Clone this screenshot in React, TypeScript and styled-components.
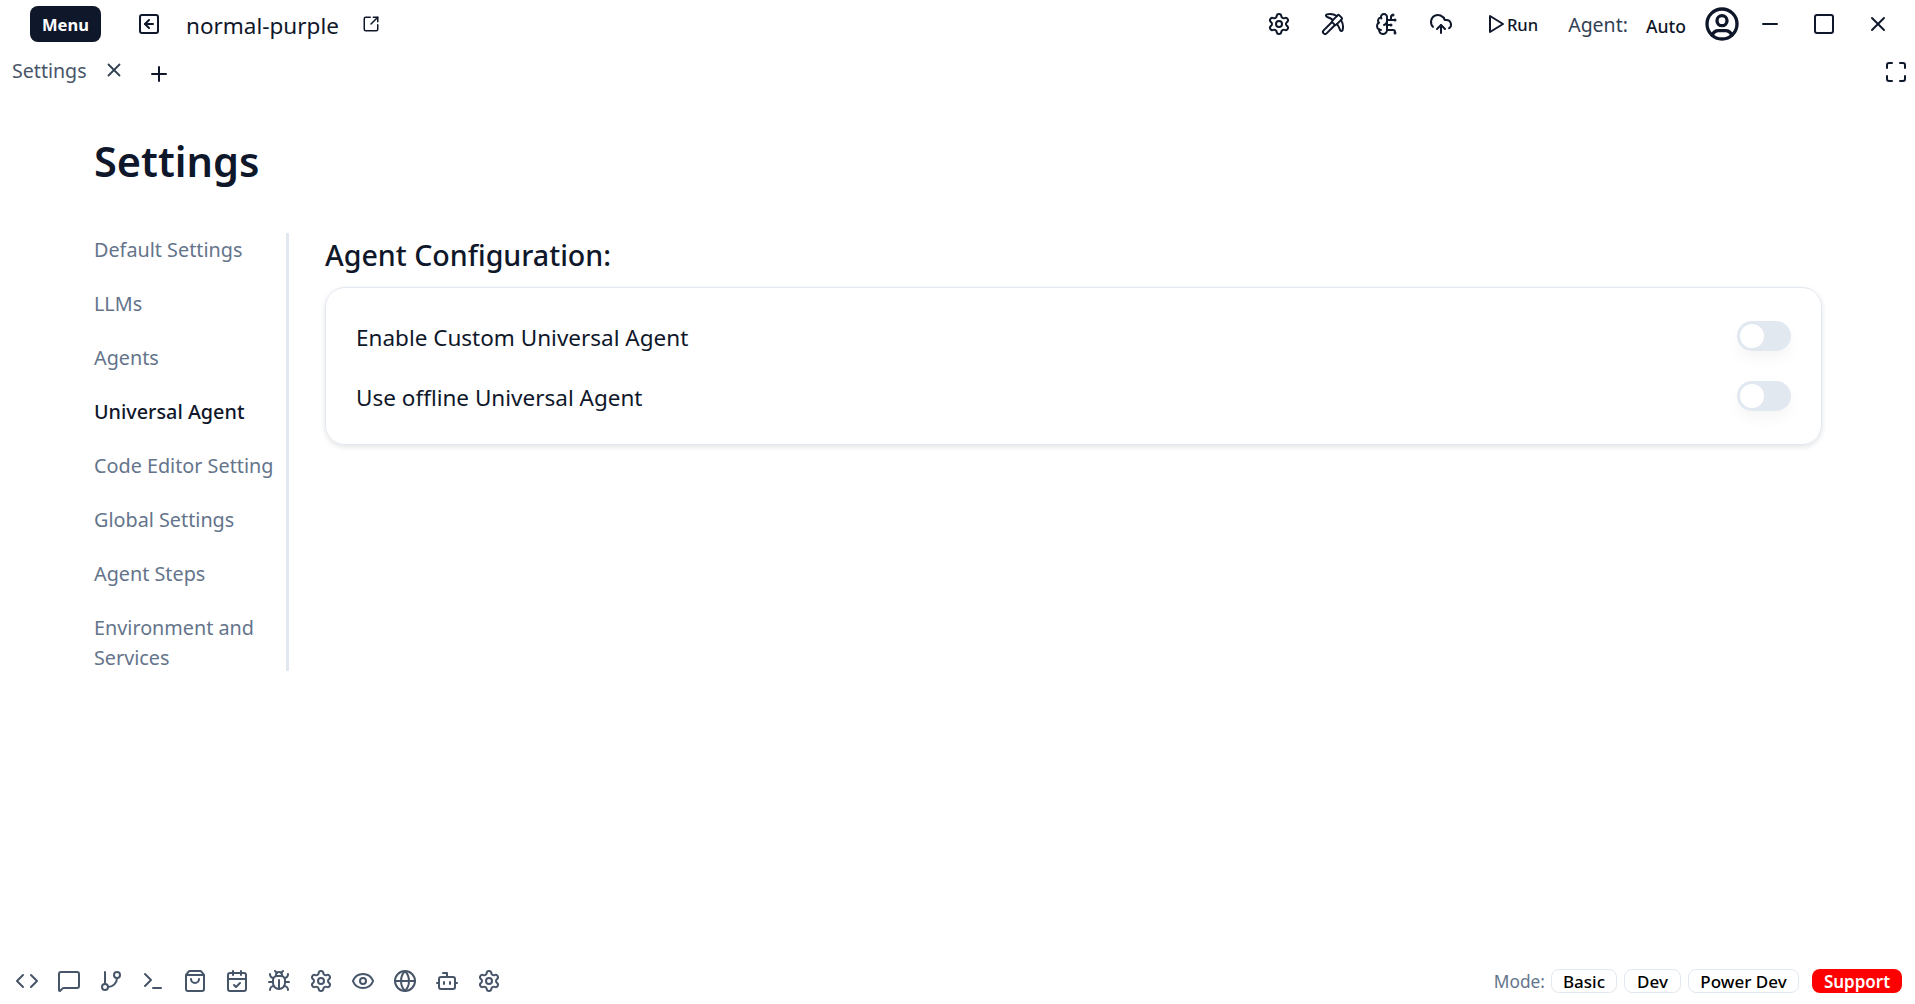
import React, { useState } from 'react'
import styled, { createGlobalStyle } from 'styled-components'
import {
  Settings as SettingsIcon,
  Pickaxe,
  BrainCircuit,
  CloudUpload,
  Minus,
  Square,
  X,
  Plus,
  Maximize,
  SquareArrowLeft,
  SquareArrowOutUpRight,
  Code,
  MessageSquare,
  GitBranch,
  Terminal,
  ShoppingBag,
  CalendarCheck,
  Bug,
  Eye,
  Globe,
  Bot,
} from 'lucide-react'
import { TbPlayerPlay, TbUserCircle } from 'react-icons/tb'

const GlobalStyle = createGlobalStyle`
  html, body {
    margin: 0;
    height: 100%;
    background: #fff;
    font-family: "Noto Sans", "Open Sans", sans-serif;
    color: #0f172a;
  }
  #root {
    height: 100%;
  }
`

const Page = styled.div`
  height: 100vh;
  display: flex;
  flex-direction: column;
  overflow: hidden;
`

const TopBar = styled.div`
  height: 48px;
  display: flex;
  align-items: center;
  padding: 0 25px 0 30px;
  flex-shrink: 0;
`

const MenuButton = styled.button`
  width: 71px;
  height: 36px;
  border: none;
  border-radius: 8px;
  background: #0f172a;
  color: #fff;
  font: 700 16.5px "Noto Sans", sans-serif;
  margin-right: 36px;
`

const ProjectName = styled.span`
  font-size: 22.5px;
  margin: 2px 23px 0 25px;
`

const TopActions = styled.div`
  margin-left: auto;
  display: flex;
  align-items: center;
`

const TopIcon = styled.span<{ $gap?: number }>`
  display: flex;
  margin-left: ${({ $gap }) => $gap ?? 30}px;
`

const RunLabel = styled.span`
  font-size: 16.6px;
  font-weight: 500;
`

const AgentLabel = styled.span`
  font-size: 19.5px;
  color: #334155;
  margin-left: 30px;
`

const AgentValue = styled.span`
  font-size: 17.6px;
  font-weight: 500;
  margin: 3px 0 0 18px;
`

const TabRow = styled.div`
  height: 48px;
  display: flex;
  align-items: center;
  padding: 0 7px 0 12px;
  flex-shrink: 0;
`

const TabLabel = styled.span`
  font-size: 19.6px;
  color: #475569;
  margin-top: -3px;
`

const TabClose = styled.span`
  display: flex;
  margin: -4px 0 0 16px;
  color: #334155;
`

const TabAdd = styled.span`
  display: flex;
  margin: 3px 0 0 22px;
`

const ExpandIcon = styled.span`
  display: flex;
  margin-left: auto;
`

const Main = styled.div`
  flex: 1;
  padding: 38px 93px 0 94px;
`

const PageTitle = styled.h1`
  margin: 0 0 45px;
  font-size: 41.5px;
  line-height: 54px;
  font-weight: 600;
`

const Columns = styled.div`
  display: flex;
`

const SideNav = styled.nav`
  width: 192px;
  height: 436px;
  padding-top: 2px;
  box-sizing: content-box;
  border-right: 3px solid #e2e8f0;
  display: flex;
  flex-direction: column;
  gap: 24px;
`

const NavItem = styled.a<{ $active?: boolean }>`
  font-size: 19.8px;
  line-height: 30px;
  width: 182px;
  color: ${({ $active }) => ($active ? '#0f172a' : '#64748b')};
  font-weight: ${({ $active }) => ($active ? 500 : 400)};
`

const Content = styled.div`
  flex: 1;
  padding: 1px 0 0 36px;
`

const SectionTitle = styled.h2`
  margin: 0 0 11px;
  font-size: 28.6px;
  line-height: 42px;
  font-weight: 500;
`

const Card = styled.div`
  border: 1px solid #e2e8f0;
  border-radius: 20px;
  box-shadow: 0 2px 5px rgba(15, 23, 42, 0.12);
  padding: 33px 30px;
  display: flex;
  flex-direction: column;
  gap: 30px;
`

const OptionRow = styled.div`
  display: flex;
  align-items: center;
  justify-content: space-between;
  height: 30px;
`

const OptionLabel = styled.span`
  font-size: 22.5px;
  margin-top: 2px;
`

const Toggle = styled.button<{ $on: boolean }>`
  position: relative;
  width: 54px;
  height: 30px;
  border: none;
  border-radius: 15px;
  padding: 0;
  background: ${({ $on }) => ($on ? '#0f172a' : '#e2e8f0')};
  box-shadow: 0 8px 14px rgba(15, 23, 42, 0.04);
  cursor: pointer;
`

const Thumb = styled.span<{ $on: boolean }>`
  position: absolute;
  top: 3px;
  left: ${({ $on }) => ($on ? 27 : 3)}px;
  width: 24px;
  height: 24px;
  border-radius: 50%;
  background: #fff;
`

const BottomBar = styled.div`
  height: 35px;
  display: flex;
  align-items: flex-start;
  padding: 0 13px 0 15px;
  flex-shrink: 0;
`

const ToolIcons = styled.div`
  display: flex;
  gap: 18px;
  color: #475569;
`

const ModeGroup = styled.div`
  margin-left: auto;
  display: flex;
  align-items: center;
  height: 24px;
`

const ModeLabel = styled.span`
  font-size: 17.3px;
  color: #64748b;
  margin-right: 6px;
`

const ModePill = styled.button<{ $width: number }>`
  width: ${({ $width }) => $width}px;
  height: 24px;
  margin-right: 7px;
  padding: 0;
  background: #fff;
  border: 1px solid #e2e8f0;
  border-radius: 8px;
  color: #000;
  font: 500 17px "Noto Sans", sans-serif;
`

const SupportButton = styled.button`
  width: 90px;
  height: 24px;
  margin-left: 6px;
  padding: 0;
  border: none;
  border-radius: 8px;
  background: #ff0000;
  color: #fff;
  font: 600 17px "Noto Sans", sans-serif;
`

const navItems = [
  'Default Settings',
  'LLMs',
  'Agents',
  'Universal Agent',
  'Code Editor Setting',
  'Global Settings',
  'Agent Steps',
  'Environment and Services',
]

const toolIcons = [
  Code,
  MessageSquare,
  GitBranch,
  Terminal,
  ShoppingBag,
  CalendarCheck,
  Bug,
  SettingsIcon,
  Eye,
  Globe,
  Bot,
  SettingsIcon,
]

const modes = [
  { label: 'Basic', width: 66 },
  { label: 'Dev', width: 57 },
  { label: 'Power Dev', width: 111 },
]

export default function App() {
  const [custom, setCustom] = useState(false)
  const [offline, setOffline] = useState(false)

  return (
    <Page>
      <GlobalStyle />
      <TopBar>
        <MenuButton>Menu</MenuButton>
        <SquareArrowLeft size={24} strokeWidth={2} />
        <ProjectName>normal-purple</ProjectName>
        <SquareArrowOutUpRight size={18} strokeWidth={2} />
        <TopActions>
          <SettingsIcon size={24} strokeWidth={2} />
          <TopIcon><Pickaxe size={24} strokeWidth={2} /></TopIcon>
          <TopIcon><BrainCircuit size={24} strokeWidth={2} /></TopIcon>
          <TopIcon><CloudUpload size={24} strokeWidth={2} /></TopIcon>
          <TopIcon><TbPlayerPlay size={24} /></TopIcon>
          <RunLabel>Run</RunLabel>
          <AgentLabel>Agent:</AgentLabel>
          <AgentValue>Auto</AgentValue>
          <TopIcon $gap={16}><TbUserCircle size={40} /></TopIcon>
          <TopIcon $gap={16}><Minus size={24} strokeWidth={2} /></TopIcon>
          <TopIcon><Square size={24} strokeWidth={2} /></TopIcon>
          <TopIcon><X size={24} strokeWidth={2} /></TopIcon>
        </TopActions>
      </TopBar>
      <TabRow>
        <TabLabel>Settings</TabLabel>
        <TabClose><X size={22} strokeWidth={2} /></TabClose>
        <TabAdd><Plus size={24} strokeWidth={2} /></TabAdd>
        <ExpandIcon><Maximize size={24} strokeWidth={2} /></ExpandIcon>
      </TabRow>
      <Main>
        <PageTitle>Settings</PageTitle>
        <Columns>
          <SideNav>
            {navItems.map((item) => (
              <NavItem key={item} $active={item === 'Universal Agent'}>
                {item}
              </NavItem>
            ))}
          </SideNav>
          <Content>
            <SectionTitle>Agent Configuration:</SectionTitle>
            <Card>
              <OptionRow>
                <OptionLabel>Enable Custom Universal Agent</OptionLabel>
                <Toggle $on={custom} onClick={() => setCustom(!custom)}>
                  <Thumb $on={custom} />
                </Toggle>
              </OptionRow>
              <OptionRow>
                <OptionLabel>Use offline Universal Agent</OptionLabel>
                <Toggle $on={offline} onClick={() => setOffline(!offline)}>
                  <Thumb $on={offline} />
                </Toggle>
              </OptionRow>
            </Card>
          </Content>
        </Columns>
      </Main>
      <BottomBar>
        <ToolIcons>
          {toolIcons.map((Icon, i) => (
            <Icon key={i} size={24} strokeWidth={2} />
          ))}
        </ToolIcons>
        <ModeGroup>
          <ModeLabel>Mode:</ModeLabel>
          {modes.map((mode) => (
            <ModePill key={mode.label} $width={mode.width}>
              {mode.label}
            </ModePill>
          ))}
          <SupportButton>Support</SupportButton>
        </ModeGroup>
      </BottomBar>
    </Page>
  )
}
